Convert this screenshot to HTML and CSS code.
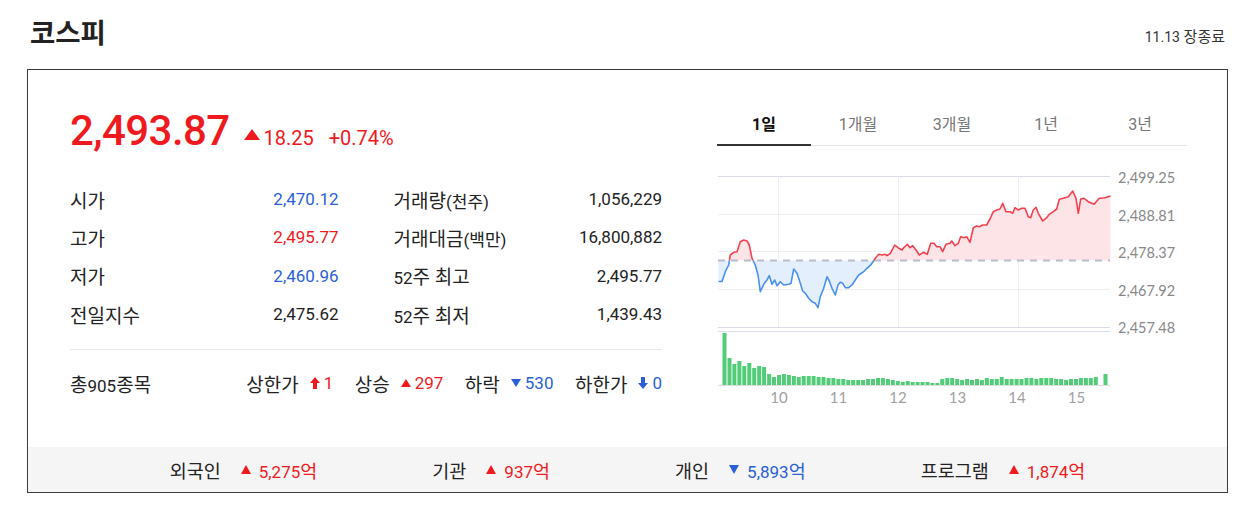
FILE: index.html
```html
<!DOCTYPE html>
<html lang="ko">
<head>
<meta charset="utf-8">
<title>코스피</title>
<link rel="stylesheet" href="styles.css">
</head>
<body>
<div class="page">
  <header class="head">
    <h2 class="title">코스피</h2>
    <span class="time"><span class="num">11.13</span> 장종료</span>
  </header>
  <section class="box">
    <div class="main">
      <div class="info">
        <div class="price">
          <strong class="now up">2,493.87</strong>
          <span class="chg up"><i class="tri tri-up"></i>18.25</span>
          <span class="rate up">+0.74%</span>
        </div>
        <dl class="stats">
          <div class="cell"><dt>시가</dt><dd class="dn">2,470.12</dd></div>
          <div class="cell"><dt>거래량<small>(천주)</small></dt><dd>1,056,229</dd></div>
          <div class="cell"><dt>고가</dt><dd class="up">2,495.77</dd></div>
          <div class="cell"><dt>거래대금<small>(백만)</small></dt><dd>16,800,882</dd></div>
          <div class="cell"><dt>저가</dt><dd class="dn">2,460.96</dd></div>
          <div class="cell"><dt><span class="num">52</span>주 최고</dt><dd>2,495.77</dd></div>
          <div class="cell"><dt>전일지수</dt><dd>2,475.62</dd></div>
          <div class="cell"><dt><span class="num">52</span>주 최저</dt><dd>1,439.43</dd></div>
        </dl>
        <div class="breadth">
          <span class="total">총<span class="num">905</span>종목</span>
          <ul class="counts">
            <li>상한가<svg class="arrow" viewBox="0 0 10 12" width="10" height="12"><path d="M5 0L10 6H7V12H3V6H0Z" fill="#f0191e"/></svg><em class="up">1</em></li>
            <li>상승<i class="tri tri-up"></i><em class="up">297</em></li>
            <li>하락<i class="tri tri-dn"></i><em class="dn">530</em></li>
            <li>하한가<svg class="arrow" viewBox="0 0 10 12" width="10" height="12"><path d="M5 12L10 6H7V0H3V6H0Z" fill="#2a5fd8"/></svg><em class="dn">0</em></li>
          </ul>
        </div>
      </div>
      <div class="chart">
        <ul class="tabs">
          <li class="on">1일</li>
          <li>1개월</li>
          <li>3개월</li>
          <li>1년</li>
          <li>3년</li>
        </ul>
        <svg class="plot" viewBox="717 146 470 264" width="470" height="264">
          <defs>
            <clipPath id="above"><rect x="700" y="140" width="500" height="120.5"/></clipPath>
            <clipPath id="below"><rect x="700" y="260.5" width="500" height="140"/></clipPath>
            <path id="ln" d="M718.5 281.5L722 281.5L725.3 271.7L728.7 265L730.3 255L733.7 252.3L737 251.7L740.3 241.7L743.7 240L747 241L749.3 245L752 258.3L755.3 265L758 275L760.3 291.7L763.7 284.3L767 280L769.3 275.7L772 284.3L774.7 280L777 285.7L780.3 281.7L783.7 285L788.7 284.3L791 283.3L793.7 269L797 273.3L800.3 283.3L802.7 291L805.3 293.3L808.7 298.3L812 301.7L815.3 303.3L818 307.7L820.3 296.7L823.7 288.3L827 276.7L829.3 281L832 288.3L835.3 295L838 285L840.3 282.3L842.7 283.3L845.3 287.7L848.7 287.7L852 285L855.3 280L858.7 275L863.7 271.7L867 268.3L871.3 264.3L875.3 258.3L878.7 254.3L882 255L885.3 254.3L887 255.7L890.3 253.3L894.7 245L898 247.7L902 250L903.3 248.3L907.3 244.3L910 247.7L912.7 245.7L916 250L919.3 255L923.3 252.3L927.3 254.3L930.7 243.3L934 243.3L936.7 246.7L940 246.7L942.7 251.7L946 244.3L950 243.3L951.7 241L955 245.7L958.3 243.3L960.7 236.7L964 237.7L966.7 236.7L970 242.3L973.3 227.7L976.7 226L979.3 226.7L982.7 225L986.7 225L990 219L993.3 211.7L996.7 210L1000 209L1002.7 203.3L1006 211.7L1010 211.7L1012.7 213.3L1015 207.7L1018.3 210L1021.7 208.3L1025 208.3L1028.3 216.7L1030.7 217.7L1033.3 210L1036 207.3L1038.3 213.3L1042.7 221L1046.7 217.7L1049.3 214.3L1053.3 211.7L1056.7 209L1059.3 199.3L1063.3 198.3L1068.3 196.7L1072.7 191L1076 198.3L1078.3 213.3L1080.7 199L1084 198.3L1088.3 201.7L1094 204.3L1099.3 198.3L1105 197.7L1110.5 196"/>
            <path id="ar" d="M718.5 260.5L718.5 281.5L722 281.5L725.3 271.7L728.7 265L730.3 255L733.7 252.3L737 251.7L740.3 241.7L743.7 240L747 241L749.3 245L752 258.3L755.3 265L758 275L760.3 291.7L763.7 284.3L767 280L769.3 275.7L772 284.3L774.7 280L777 285.7L780.3 281.7L783.7 285L788.7 284.3L791 283.3L793.7 269L797 273.3L800.3 283.3L802.7 291L805.3 293.3L808.7 298.3L812 301.7L815.3 303.3L818 307.7L820.3 296.7L823.7 288.3L827 276.7L829.3 281L832 288.3L835.3 295L838 285L840.3 282.3L842.7 283.3L845.3 287.7L848.7 287.7L852 285L855.3 280L858.7 275L863.7 271.7L867 268.3L871.3 264.3L875.3 258.3L878.7 254.3L882 255L885.3 254.3L887 255.7L890.3 253.3L894.7 245L898 247.7L902 250L903.3 248.3L907.3 244.3L910 247.7L912.7 245.7L916 250L919.3 255L923.3 252.3L927.3 254.3L930.7 243.3L934 243.3L936.7 246.7L940 246.7L942.7 251.7L946 244.3L950 243.3L951.7 241L955 245.7L958.3 243.3L960.7 236.7L964 237.7L966.7 236.7L970 242.3L973.3 227.7L976.7 226L979.3 226.7L982.7 225L986.7 225L990 219L993.3 211.7L996.7 210L1000 209L1002.7 203.3L1006 211.7L1010 211.7L1012.7 213.3L1015 207.7L1018.3 210L1021.7 208.3L1025 208.3L1028.3 216.7L1030.7 217.7L1033.3 210L1036 207.3L1038.3 213.3L1042.7 221L1046.7 217.7L1049.3 214.3L1053.3 211.7L1056.7 209L1059.3 199.3L1063.3 198.3L1068.3 196.7L1072.7 191L1076 198.3L1078.3 213.3L1080.7 199L1084 198.3L1088.3 201.7L1094 204.3L1099.3 198.3L1105 197.7L1110.5 196L1110.5 260.5Z"/>
          </defs>
          <g class="grid">
            <line x1="718" y1="176.5" x2="1110" y2="176.5" class="edge"/>
            <line x1="718" y1="214.5" x2="1110" y2="214.5"/>
            <line x1="718" y1="251.5" x2="1110" y2="251.5"/>
            <line x1="718" y1="289.5" x2="1110" y2="289.5"/>
            <line x1="778.5" y1="176" x2="778.5" y2="327"/>
            <line x1="898.5" y1="176" x2="898.5" y2="327"/>
            <line x1="1018.5" y1="176" x2="1018.5" y2="327"/>
            <line x1="718" y1="327.5" x2="1110" y2="327.5" class="edge"/>
            <line x1="718" y1="331.5" x2="1110" y2="331.5" class="edge"/>
            <line x1="718" y1="385.5" x2="1110" y2="385.5" class="axis"/>
          </g>
          <use href="#ar" class="fill-up" clip-path="url(#above)"/>
          <use href="#ar" class="fill-dn" clip-path="url(#below)"/>
          <line x1="718" y1="260.5" x2="1110" y2="260.5" class="base"/>
          <use href="#ln" class="line-up" clip-path="url(#above)"/>
          <use href="#ln" class="line-dn" clip-path="url(#below)"/>
          <g class="ylab">
            <text x="1118" y="177">2,499.25</text>
            <text x="1118" y="215">2,488.81</text>
            <text x="1118" y="252">2,478.37</text>
            <text x="1118" y="290">2,467.92</text>
            <text x="1118" y="327">2,457.48</text>
          </g>
          <g class="vol">
            <rect x="722.5" y="333" width="4" height="52"/>
            <rect x="727.5" y="358" width="4" height="27"/>
            <rect x="732.4" y="364" width="4" height="21"/>
            <rect x="737.4" y="361" width="4" height="24"/>
            <rect x="742.3" y="366" width="4" height="19"/>
            <rect x="747.3" y="363" width="4" height="22"/>
            <rect x="752.2" y="368" width="4" height="17"/>
            <rect x="757.2" y="366" width="4" height="19"/>
            <rect x="762.1" y="367" width="4" height="18"/>
            <rect x="767.1" y="374" width="4" height="11"/>
            <rect x="772.0" y="377" width="4" height="8"/>
            <rect x="777.0" y="375" width="4" height="10"/>
            <rect x="781.9" y="374" width="4" height="11"/>
            <rect x="786.9" y="375" width="4" height="10"/>
            <rect x="791.8" y="376" width="4" height="9"/>
            <rect x="796.8" y="377" width="4" height="8"/>
            <rect x="801.7" y="376" width="4" height="9"/>
            <rect x="806.7" y="376" width="4" height="9"/>
            <rect x="811.6" y="376" width="4" height="9"/>
            <rect x="816.6" y="377" width="4" height="8"/>
            <rect x="821.5" y="377" width="4" height="8"/>
            <rect x="826.5" y="378" width="4" height="7"/>
            <rect x="831.4" y="378" width="4" height="7"/>
            <rect x="836.4" y="379" width="4" height="6"/>
            <rect x="841.3" y="379" width="4" height="6"/>
            <rect x="846.3" y="380" width="4" height="5"/>
            <rect x="851.2" y="380" width="4" height="5"/>
            <rect x="856.2" y="380" width="4" height="5"/>
            <rect x="861.1" y="380" width="4" height="5"/>
            <rect x="866.1" y="379" width="4" height="6"/>
            <rect x="871.0" y="379" width="4" height="6"/>
            <rect x="876.0" y="378" width="4" height="7"/>
            <rect x="880.9" y="378" width="4" height="7"/>
            <rect x="885.9" y="379" width="4" height="6"/>
            <rect x="890.8" y="380" width="4" height="5"/>
            <rect x="895.8" y="381" width="4" height="4"/>
            <rect x="900.7" y="382" width="4" height="3"/>
            <rect x="905.7" y="381" width="4" height="4"/>
            <rect x="910.6" y="382" width="4" height="3"/>
            <rect x="915.6" y="382" width="4" height="3"/>
            <rect x="920.5" y="382" width="4" height="3"/>
            <rect x="925.5" y="382" width="4" height="3"/>
            <rect x="930.4" y="383" width="4" height="2"/>
            <rect x="935.4" y="383" width="4" height="2"/>
            <rect x="940.3" y="379" width="4" height="6"/>
            <rect x="945.3" y="378" width="4" height="7"/>
            <rect x="950.2" y="378" width="4" height="7"/>
            <rect x="955.2" y="379" width="4" height="6"/>
            <rect x="960.1" y="380" width="4" height="5"/>
            <rect x="965.1" y="379" width="4" height="6"/>
            <rect x="970.0" y="380" width="4" height="5"/>
            <rect x="975.0" y="379" width="4" height="6"/>
            <rect x="979.9" y="380" width="4" height="5"/>
            <rect x="984.9" y="378" width="4" height="7"/>
            <rect x="989.8" y="379" width="4" height="6"/>
            <rect x="994.8" y="379" width="4" height="6"/>
            <rect x="999.7" y="377" width="4" height="8"/>
            <rect x="1004.7" y="379" width="4" height="6"/>
            <rect x="1009.6" y="379" width="4" height="6"/>
            <rect x="1014.6" y="379" width="4" height="6"/>
            <rect x="1019.5" y="379" width="4" height="6"/>
            <rect x="1024.5" y="378" width="4" height="7"/>
            <rect x="1029.4" y="378" width="4" height="7"/>
            <rect x="1034.4" y="379" width="4" height="6"/>
            <rect x="1039.3" y="378" width="4" height="7"/>
            <rect x="1044.3" y="378" width="4" height="7"/>
            <rect x="1049.2" y="378" width="4" height="7"/>
            <rect x="1054.2" y="379" width="4" height="6"/>
            <rect x="1059.1" y="379" width="4" height="6"/>
            <rect x="1064.1" y="380" width="4" height="5"/>
            <rect x="1069.0" y="379" width="4" height="6"/>
            <rect x="1074.0" y="379" width="4" height="6"/>
            <rect x="1078.9" y="378" width="4" height="7"/>
            <rect x="1083.9" y="378" width="4" height="7"/>
            <rect x="1088.8" y="378" width="4" height="7"/>
            <rect x="1093.8" y="377" width="4" height="8"/>
            <rect x="1103.5" y="374" width="4" height="11"/>
          </g>
          <g class="xlab">
            <text x="779" y="397">10</text>
            <text x="838.5" y="397">11</text>
            <text x="898" y="397">12</text>
            <text x="957.5" y="397">13</text>
            <text x="1017" y="397">14</text>
            <text x="1076.5" y="397">15</text>
          </g>
        </svg>
      </div>
    </div>
    <ul class="investors">
      <li>외국인<i class="tri tri-up"></i><span class="up"><span class="num">5,275</span>억</span></li>
      <li>기관<i class="tri tri-up"></i><span class="up"><span class="num">937</span>억</span></li>
      <li>개인<i class="tri tri-dn"></i><span class="dn"><span class="num">5,893</span>억</span></li>
      <li>프로그램<i class="tri tri-up"></i><span class="up"><span class="num">1,874</span>억</span></li>
    </ul>
  </section>
</div>
</body>
</html>
```

FILE: styles.css
```css
* { box-sizing: border-box; }
body {
  margin: 0;
  background: #fff;
  color: #222;
  font-family: Roboto, "Noto Sans CJK KR", sans-serif;
}
.page { padding: 0 17px 0 27px; }

.head {
  display: flex;
  justify-content: space-between;
  align-items: center;
  height: 62px;
  margin-bottom: 7px;
}
.title {
  margin: 0 0 0 3px;
  font-family: "Noto Sans CJK KR", sans-serif;
  font-size: 27.5px;
  font-weight: 700;
  line-height: 30px;
  color: #222;
}
.time {
  margin: 8px 3px 0 0;
  font-size: 15px;
  color: #333;
}
.time .num { font-size: 14px; }

.box { border: 1px solid #3c3c3c; }
.main {
  display: flex;
  gap: 55px;
  height: 377px;
  padding: 36px 40px 0 42px;
}
.info { width: 592px; }

.up { color: #f0191e; }
.dn { color: #2a5fd8; }

.tri {
  display: inline-block;
  width: 0;
  height: 0;
  border-left: 5.5px solid transparent;
  border-right: 5.5px solid transparent;
}
.tri-up { border-bottom: 8px solid #f0191e; }
.tri-dn { border-top: 8px solid #2a5fd8; }

.price {
  display: flex;
  align-items: baseline;
  height: 50px;
}
.now {
  font-size: 42px;
  font-weight: 500;
  line-height: 50px;
  letter-spacing: -0.6px;
}
.chg {
  margin-left: 14px;
  font-size: 20px;
}
.chg .tri {
  border-left-width: 8px;
  border-right-width: 8px;
  border-bottom-width: 11px;
  margin: 0 4px 5px 0;
}
.rate {
  margin-left: 15px;
  font-size: 20px;
}

.stats {
  display: grid;
  grid-template-columns: 1fr 1fr;
  grid-auto-rows: 38.33px;
  column-gap: 55px;
  margin: 24px 0 0;
}
.cell {
  display: flex;
  justify-content: space-between;
  align-items: center;
}
.cell dt, .cell dd { margin: 0; }
.cell dt { font-size: 19px; color: #222; }
.cell dd { font-size: 17px; }
.cell small { font-size: 17px; }
.num { font-size: 17px; }

.breadth {
  display: flex;
  justify-content: space-between;
  align-items: center;
  height: 67px;
  margin-top: 16px;
  border-top: 1px solid #e6e6e6;
  font-size: 19px;
}
.counts {
  display: flex;
  margin: 0;
  padding: 0;
  list-style: none;
}
.counts li {
  display: flex;
  align-items: center;
  margin-left: 21.5px;
}
.counts .arrow { margin: 0 4px 0 11px; }
.counts .tri { margin: 0 4px 0 11px; }
.counts em { font-style: normal; font-size: 17px; }

.chart { width: 470px; }
.tabs {
  display: flex;
  height: 40px;
  margin: 0;
  padding: 0;
  list-style: none;
  border-bottom: 1px solid #e4e4e4;
}
.tabs li {
  flex: 1;
  text-align: center;
  font-size: 16px;
  line-height: 38px;
  color: #777;
}
.tabs li.on {
  height: 40px;
  margin-bottom: -1px;
  border-bottom: 2px solid #333;
  color: #111;
  font-weight: 700;
}
.plot { display: block; }

.grid line { stroke: #eeeeee; stroke-width: 1; }
.grid line.edge { stroke: #d8dde8; }
.grid line.axis { stroke: #dddddd; }
.fill-up { fill: #fde5e7; stroke: none; }
.fill-dn { fill: #e4effd; stroke: none; }
.base { stroke: #b9bccb; stroke-width: 2; stroke-dasharray: 7 6; }
.line-up, .line-dn { fill: none; stroke-width: 1.6; stroke-linejoin: round; }
.line-up { stroke: #f7404f; }
.line-dn { stroke: #4a90f0; }
.vol rect { fill: #52cc78; }
.ylab text {
  font-family: Lato, "Noto Sans", sans-serif;
  font-size: 14.5px;
  fill: #888;
  dominant-baseline: central;
}
.xlab text {
  font-family: Lato, "Noto Sans", sans-serif;
  font-size: 15px;
  fill: #a0a0a0;
  text-anchor: middle;
  dominant-baseline: central;
}

.investors {
  display: flex;
  justify-content: center;
  align-items: center;
  height: 45px;
  margin: 0;
  padding: 0;
  list-style: none;
  background: #f5f5f5;
  font-size: 18.5px;
}
.investors li {
  display: flex;
  align-items: center;
}
.investors li + li { margin-left: 115px; }
.investors li:nth-child(3) { margin-left: 125px; }
.investors .tri {
  margin: 0 8px 0 20px;
  border-left-width: 5px;
  border-right-width: 5px;
  border-bottom-width: 9px;
}
.investors .tri-dn { border-bottom-width: 0; border-top-width: 9px; }
```
